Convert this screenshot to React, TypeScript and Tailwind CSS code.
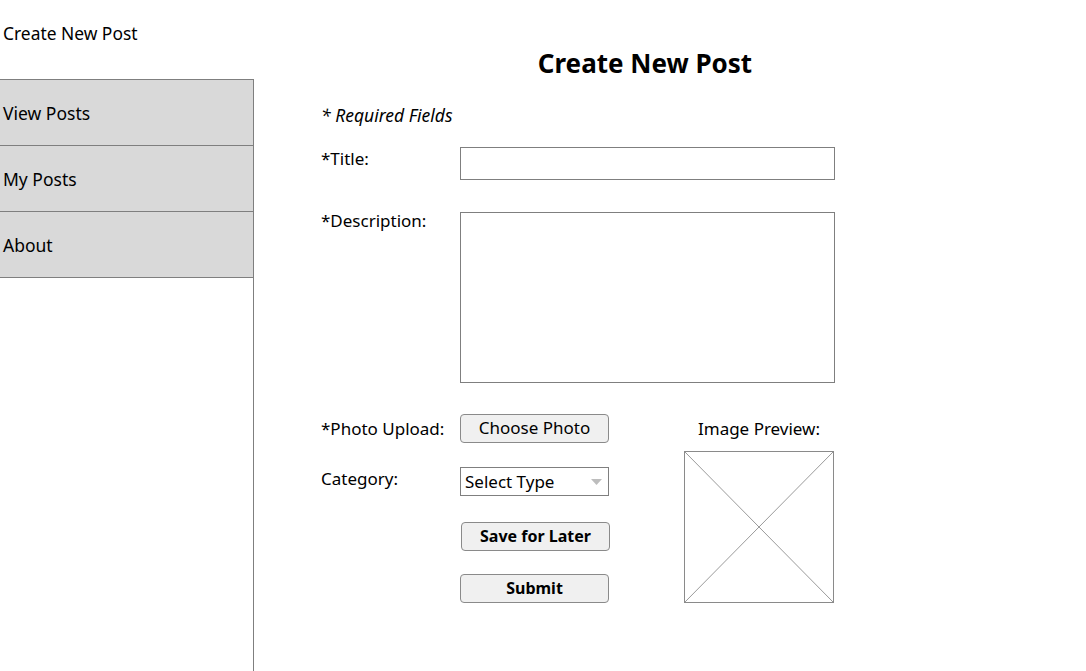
import React from "react";

const font = { fontFamily: '"Segoe UI", "Noto Sans", "Open Sans", sans-serif' };

function NavItem({ label }: { label: string }) {
  return (
    <div className="h-[66px] border-b border-[#7f7f7f] bg-[#d9d9d9] flex items-center pl-[3px] pt-[2px] text-[17.5px] text-black">
      {label}
    </div>
  );
}

function Btn({ label, bold }: { label: string; bold?: boolean }) {
  return (
    <div
      className={
        "w-[149px] h-[29px] rounded-[4px] border border-[#8a8a8a] bg-[#f0f0f0] flex items-center justify-center pb-[2px] text-black " +
        (bold ? "font-bold text-[16px]" : "text-[17px]")
      }
    >
      {label}
    </div>
  );
}

export default function App() {
  return (
    <div className="w-[1086px] h-[671px] bg-white flex overflow-hidden text-black" style={font}>
      {/* Sidebar */}
      <div className="w-[254px] shrink-0 flex flex-col">
        <div className="h-[79px] pl-[3px] pt-[20px] text-[17.4px] leading-[26px]">Create New Post</div>
        <div className="flex-1 border-r border-[#7f7f7f] flex flex-col">
          <div className="border-t border-[#7f7f7f]">
            <NavItem label="View Posts" />
            <NavItem label="My Posts" />
            <NavItem label="About" />
          </div>
        </div>
      </div>

      {/* Main */}
      <div className="flex-1 pl-[67px] flex flex-col">
        <div className="pt-[45px] w-[648px] text-center font-bold text-[26px] leading-[36px]">Create New Post</div>
        <div className="mt-[22px] italic text-[17.5px] leading-[24px]">* Required Fields</div>

        <div className="mt-[20px] flex">
          <div className="w-[139px] text-[17px] leading-[24px]">*Title:</div>
          <div className="w-[375px] h-[33px] border border-[#7f7f7f]" />
        </div>

        <div className="mt-[32px] flex">
          <div className="w-[139px] text-[17px] leading-[24px] -mt-[3px]">*Description:</div>
          <div className="w-[375px] h-[171px] border border-[#7f7f7f]" />
        </div>

        <div className="mt-[31px] flex">
          <div className="flex flex-col">
            <div className="flex items-center h-[29px]">
              <div className="w-[139px] text-[17px] leading-[24px]">*Photo Upload:</div>
              <Btn label="Choose Photo" />
            </div>
            <div className="flex mt-[24px]">
              <div className="w-[139px] text-[17px] leading-[24px]">Category:</div>
              <div className="w-[149px] h-[29px] border border-[#7f7f7f] flex items-center justify-between pl-[4px] pr-[6px] text-[17px]">
                <span>Select Type</span>
                <svg width="11" height="6" viewBox="0 0 11 6">
                  <polygon points="0,0 11,0 5.5,6" fill="#bdbdbd" />
                </svg>
              </div>
            </div>
            <div className="mt-[26px] pl-[140px]">
              <Btn label="Save for Later" bold />
            </div>
            <div className="mt-[23px] pl-[139px]">
              <Btn label="Submit" bold />
            </div>
          </div>

          <div className="ml-[74px] flex flex-col items-center w-[150px]">
            <div className="h-[29px] flex items-center text-[17px] whitespace-nowrap">Image Preview:</div>
            <div className="mt-[8px] w-[150px] h-[152px] border border-[#8a8a8a] relative">
              <svg className="absolute inset-0" width="148" height="150" viewBox="0 0 148 150">
                <line x1="0" y1="0" x2="148" y2="150" stroke="#9a9a9a" strokeWidth="1" />
                <line x1="148" y1="0" x2="0" y2="150" stroke="#9a9a9a" strokeWidth="1" />
              </svg>
            </div>
          </div>
        </div>
      </div>
    </div>
  );
}
